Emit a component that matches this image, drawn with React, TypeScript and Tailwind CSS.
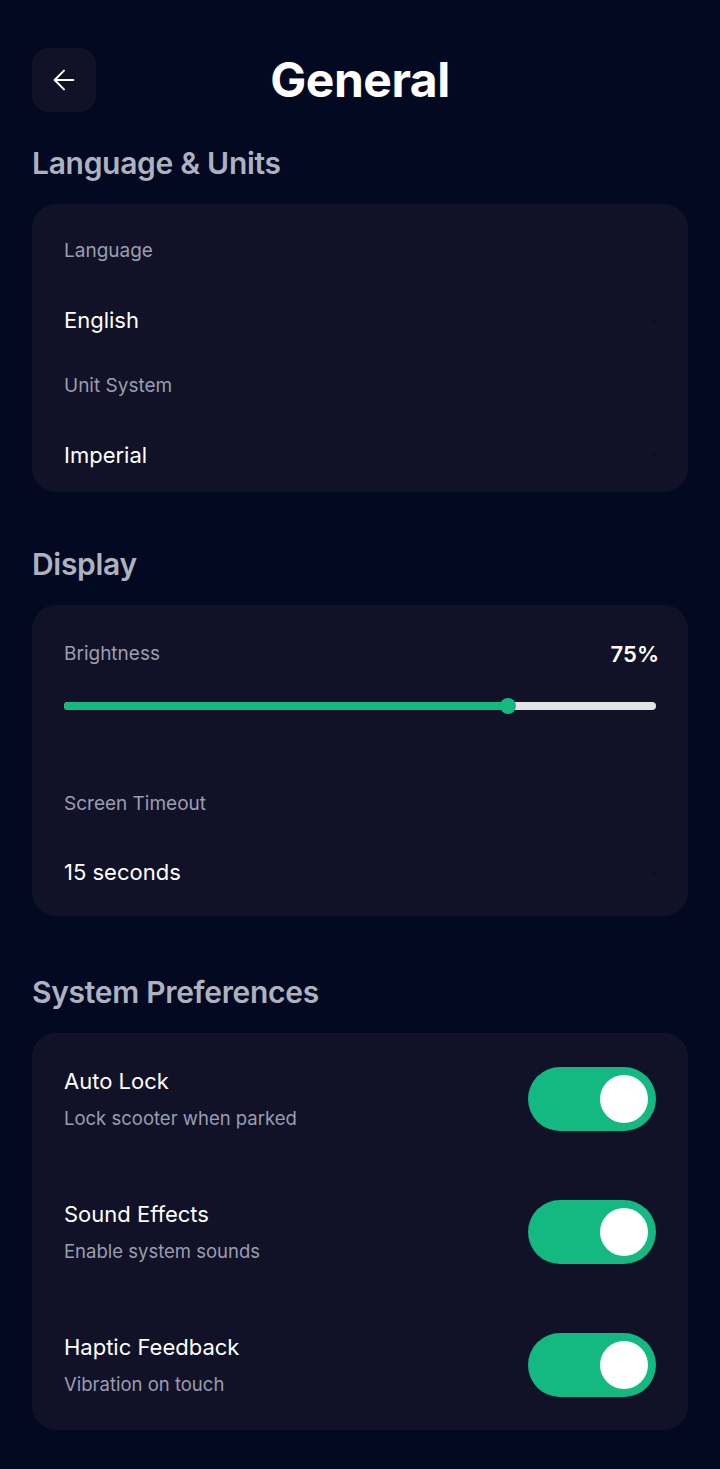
import React from "react";
import { ArrowLeft } from "lucide-react";

function Toggle() {
  return (
    <div className="flex h-16 w-32 shrink-0 items-center justify-end rounded-full bg-[#13b981] px-2">
      <div className="h-12 w-12 rounded-full bg-white" />
    </div>
  );
}

function Dot() {
  return <div className="h-[3px] w-[3px] rounded-full bg-[#0b0c1c]" />;
}

function PrefRow({ title, sub }: { title: string; sub: string }) {
  return (
    <div className="flex h-16 items-center justify-between">
      <div className="flex flex-col">
        <div className="text-[22px] leading-[28px] text-white">{title}</div>
        <div className="mt-[9px] text-[18.5px] leading-[28px] text-[#9b9db0]">{sub}</div>
      </div>
      <Toggle />
    </div>
  );
}

export default function App() {
  return (
    <div
      className="min-h-[1469px] w-full bg-[#020920] px-8 pt-12 pb-[39px]"
      style={{ fontFamily: "Inter, 'Noto Sans', sans-serif" }}
    >
      {/* Header */}
      <div className="relative flex h-16 items-center justify-center">
        <button className="absolute left-0 top-0 flex h-16 w-16 items-center justify-center rounded-2xl bg-[#111228]">
          <ArrowLeft size={32} strokeWidth={1.5} className="text-white" />
        </button>
        <h1 className="text-[48px] font-bold tracking-[-0.5px] text-white">General</h1>
      </div>

      {/* Language & Units */}
      <h2 className="mt-[33px] text-[30px] leading-[36px] font-semibold tracking-[-0.3px] text-[#adb2c1]">
        Language &amp; Units
      </h2>
      <div className="mt-[23px] rounded-3xl bg-[#111228] px-8 pt-[33px] pb-[21px]">
        <div className="text-[19px] leading-[28px] text-[#9b9db0]">Language</div>
        <div className="mt-[39px] flex h-8 items-center justify-between">
          <span className="text-[22px] text-white">English</span>
          <Dot />
        </div>
        <div className="mt-9 text-[19px] leading-[28px] text-[#9b9db0]">Unit System</div>
        <div className="mt-[39px] flex h-8 items-center justify-between">
          <span className="text-[22px] text-white">Imperial</span>
          <Dot />
        </div>
      </div>

      {/* Display */}
      <h2 className="mt-[54px] text-[30px] leading-[36px] font-semibold tracking-[-0.3px] text-[#adb2c1]">
        Display
      </h2>
      <div className="mt-[23px] rounded-3xl bg-[#111228] pl-8 pr-8 pt-[35px] pb-[28px]">
        <div className="flex h-7 items-center justify-between">
          <span className="text-[19px] text-[#9b9db0]">Brightness</span>
          <span className="-mr-[3px] text-[22px] font-semibold text-white">75%</span>
        </div>
        <div className="relative mt-[30px] h-4">
          <div className="absolute left-0 right-0 top-1/2 h-2 -translate-y-1/2 rounded-full bg-[#e4e4e7]" />
          <div className="absolute left-0 top-1/2 h-2 w-[75%] -translate-y-1/2 rounded-full bg-[#13b981]" />
          <div className="absolute top-1/2 left-[75%] h-4 w-4 -translate-x-1/2 -translate-y-1/2 rounded-full bg-[#13b981]" />
        </div>
        <div className="mt-[76px] text-[19px] leading-[28px] text-[#9b9db0]">Screen Timeout</div>
        <div className="mt-[38px] flex h-8 items-center justify-between">
          <span className="text-[22px] text-white">15 seconds</span>
          <Dot />
        </div>
      </div>

      {/* System Preferences */}
      <h2 className="mt-[58px] text-[30px] leading-[36px] font-semibold tracking-[-0.3px] text-[#adb2c1]">
        System Preferences
      </h2>
      <div className="mt-[23px] flex flex-col gap-[69px] rounded-3xl bg-[#111228] px-8 pt-[34px] pb-[33px]">
        <PrefRow title="Auto Lock" sub="Lock scooter when parked" />
        <PrefRow title="Sound Effects" sub="Enable system sounds" />
        <PrefRow title="Haptic Feedback" sub="Vibration on touch" />
      </div>
    </div>
  );
}
